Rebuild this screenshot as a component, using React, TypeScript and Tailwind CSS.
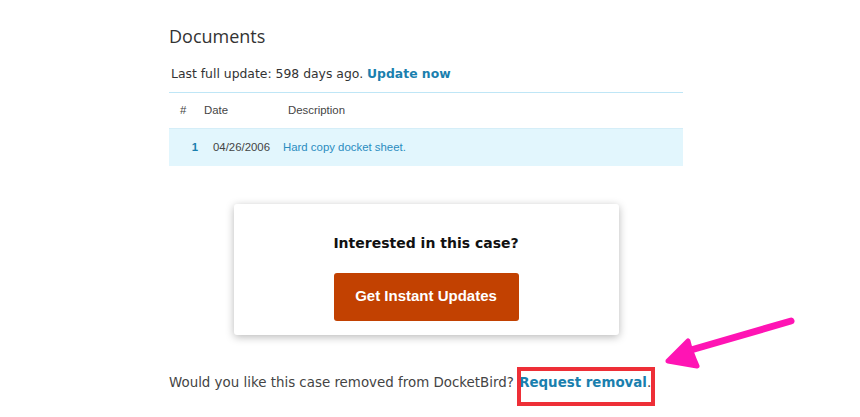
import React from "react";

// annotation layer drawn over the page: pink arrow + red highlight box
const Annotations = () => (
  <>
    <div className="absolute left-[517px] top-[367px] w-[138px] h-[39px] border-[4px] border-[#ee2f37] pointer-events-none" />
    <svg
      className="absolute left-0 top-0 pointer-events-none"
      width="860"
      height="417"
      viewBox="0 0 860 417"
    >
      <path d="M791 321 L684 352" stroke="#ff14b4" strokeWidth="7" strokeLinecap="round" fill="none" />
      <path d="M668 361 L688 341 Q690 350 697 366 Z" fill="#ff14b4" stroke="#ff14b4" strokeWidth="5" strokeLinejoin="round" />
    </svg>
  </>
);

const App = () => {
  return (
    <div className="relative w-[860px] h-[417px] bg-white overflow-hidden">
      <div className="ml-[169px] w-[514px] pt-[24px]">
        <h2 className="text-[18px] leading-[24px] text-[#333] font-['Open_Sans',sans-serif]">
          Documents
        </h2>

        <p className="mt-[17px] text-[12.4px] leading-[18px] text-[#333] font-['DejaVu_Sans',sans-serif] pl-[2px]">
          Last full update: 598 days ago.{" "}
          <a className="font-bold text-[#1a7fae]">Update now</a>
        </p>

        <table className="mt-[9px] w-full border-t border-[#bfe6f6] font-['Liberation_Sans',Arial,sans-serif] text-[11.4px] text-[#444]">
          <thead>
            <tr className="h-[36px] border-b border-[#d5eef8]">
              <th className="w-[35px] pl-[11px] pt-[1px] text-left font-normal">#</th>
              <th className="w-[84px] pt-[1px] text-left font-normal">Date</th>
              <th className="pt-[1px] text-left font-normal">Description</th>
            </tr>
          </thead>
          <tbody>
            <tr className="h-[37px] bg-[#e2f6fd]">
              <td className="text-right pr-[6px] font-bold text-[#1a7fae]">1</td>
              <td className="text-[#444] pl-[9px]">04/26/2006</td>
              <td className="text-[#2a8cc0] -translate-x-[5px]">Hard copy docket sheet.</td>
            </tr>
          </tbody>
        </table>

        <div className="mt-[38px] mx-auto w-[385px] h-[131px] bg-white rounded-[3px] shadow-[0_2px_8px_rgba(0,0,0,0.28)] flex flex-col items-center pt-[30px]">
          <div className="text-[14px] leading-[18px] font-bold text-[#111] font-['DejaVu_Sans',sans-serif]">
            Interested in this case?
          </div>
          <button className="mt-[21px] w-[185px] h-[48px] rounded-[3px] bg-[#c24101] text-white text-[15px] font-bold font-['Liberation_Sans',Arial,sans-serif]">
            Get Instant Updates
          </button>
        </div>

        <p className="mt-[39px] text-[13.4px] leading-[18px] text-[#444] font-['DejaVu_Sans',sans-serif]">
          Would you like this case removed from DocketBird?{" "}
          <a className="font-bold text-[#1a7fae] ml-[1px]">Request removal</a>.
        </p>
      </div>
      <Annotations />
    </div>
  );
};

export default App;
